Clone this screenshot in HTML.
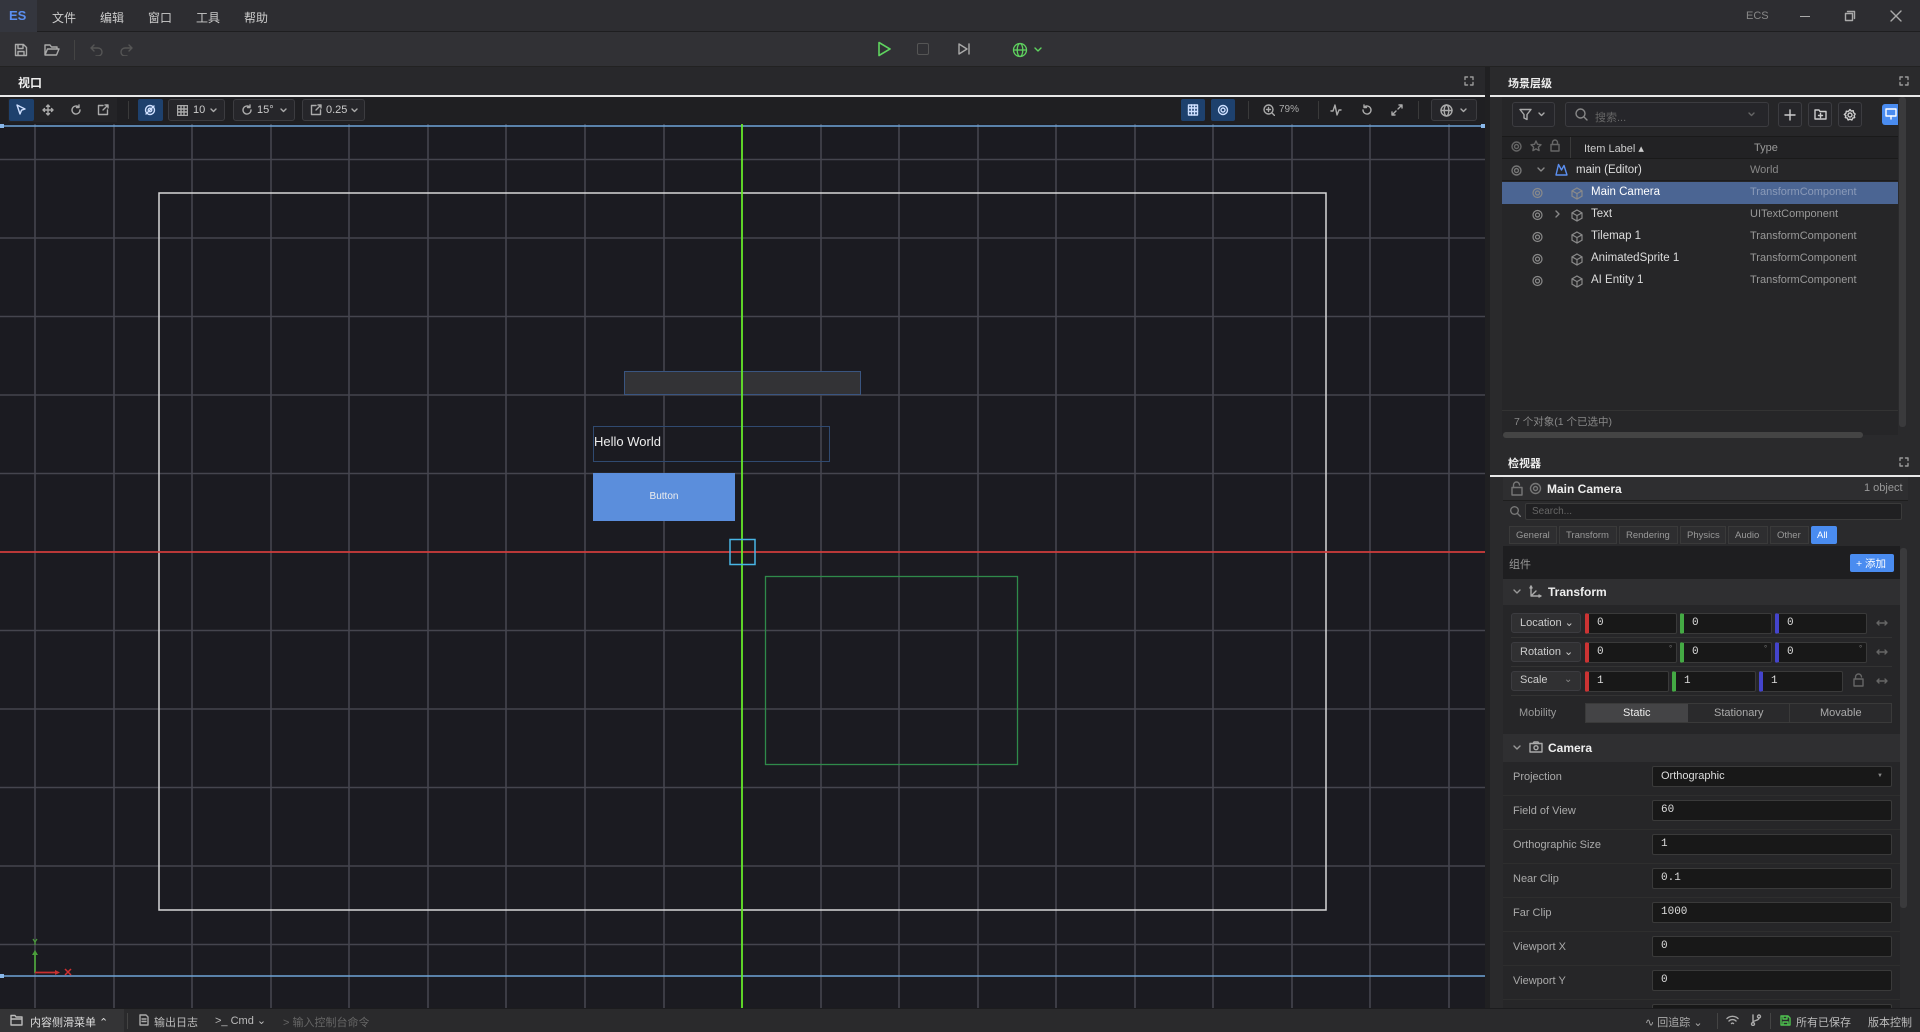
<!DOCTYPE html>
<html><head><meta charset="utf-8"><style>
*{box-sizing:border-box;margin:0;padding:0}
body{width:1920px;height:1032px;overflow:hidden;background:#2b2b2e;font-family:"Liberation Sans","Noto Sans CJK SC",sans-serif;color:#ddd;font-size:12px;position:relative}
.a{position:absolute}
.t{position:absolute;white-space:nowrap}
.mono{font-family:"Liberation Mono","DejaVu Sans Mono",monospace}
.ic{position:absolute;fill:none;stroke:#aaa;stroke-width:1.4;stroke-linecap:round;stroke-linejoin:round}
.btn{position:absolute;border:1px solid #3c3c40;border-radius:3px;background:#26262a}
.fld{position:absolute;background:#181818;border:1px solid #3a3a3a;border-radius:2px;height:21px;font-family:"Liberation Mono",monospace;font-size:11px;color:#ddd;padding:3px 8px}
.row{position:absolute;left:1503px;width:397px;height:34px;border-bottom:1px solid #2e2e2e}
.lbl{position:absolute;left:10px;top:9px;color:#aaa;font-size:11px}
</style></head><body>
<!-- menubar -->
<div class="a" style="left:0;top:0;width:1920px;height:32px;background:#2d2d31;border-bottom:1px solid #1e1e20"></div>
<div class="a" style="left:0;top:0;width:37px;height:32px;background:#34363e"></div>
<div class="t" style="left:9px;top:8px;color:#5b8ff0;font-weight:bold;font-size:13px">ES</div>
<div class="t" style="left:52px;top:9px;font-size:12px;color:#ccc">文件</div>
<div class="t" style="left:100px;top:9px;font-size:12px;color:#ccc">编辑</div>
<div class="t" style="left:148px;top:9px;font-size:12px;color:#ccc">窗口</div>
<div class="t" style="left:196px;top:9px;font-size:12px;color:#ccc">工具</div>
<div class="t" style="left:244px;top:9px;font-size:12px;color:#ccc">帮助</div>
<div class="t" style="left:1746px;top:10px;font-size:11px;color:#888">ECS</div>
<div class="a" style="left:1800px;top:16px;width:10px;height:1px;background:#aaa"></div>
<svg class="ic" style="left:1844px;top:10px" width="12" height="12"><rect x="1.5" y="3.5" width="7" height="7"/><path d="M3.5 1.5h7v7"/></svg>
<svg class="ic" style="left:1890px;top:10px" width="12" height="12"><path d="M1 1l10 10M11 1L1 11"/></svg>
<!-- toolbar -->
<div class="a" style="left:0;top:32px;width:1920px;height:35px;background:#313135;border-bottom:1px solid #222"></div>
<svg class="ic" style="left:14px;top:43px" width="14" height="14"><path d="M1.5 1.5h8l3 3v8h-11z M4 1.5v4h5v-4 M4 12.5v-4h6v4"/></svg>
<svg class="ic" style="left:44px;top:43px" width="16" height="14"><path d="M1 12V2h5l1.5 2H13v2 M1 12l2.5-6H15l-2.5 6z"/></svg>
<div class="a" style="left:74px;top:40px;width:1px;height:20px;background:#444"></div>
<svg class="ic" style="left:90px;top:44px;stroke:#555" width="14" height="12"><path d="M4 1L1 4l3 3 M1 4h7a4 4 0 010 8H6"/></svg>
<svg class="ic" style="left:119px;top:44px;stroke:#555" width="14" height="12"><path d="M10 1l3 3-3 3 M13 4H6a4 4 0 000 8h2"/></svg>
<svg class="a" style="left:876px;top:41px" width="16" height="16"><path d="M3 1.5L14 8 3 14.5z" fill="none" stroke="#5fd35f" stroke-width="1.6" stroke-linejoin="round"/></svg>
<div class="a" style="left:917px;top:43px;width:12px;height:12px;border:1.5px solid #555;border-radius:2px"></div>
<svg class="ic" style="left:957px;top:42px" width="14" height="14"><path d="M2 2l8 5-8 5z M12 2v10"/></svg>
<svg class="a" style="left:1012px;top:42px" width="16" height="16"><g fill="none" stroke="#5fd35f" stroke-width="1.3"><circle cx="8" cy="8" r="6.5"/><ellipse cx="8" cy="8" rx="2.8" ry="6.5"/><path d="M1.5 8h13"/></g></svg>
<svg class="ic" style="left:1034px;top:47px;stroke:#5fd35f" width="8" height="6"><path d="M1 1l3 3 3-3"/></svg>
<!-- viewport panel -->
<div class="a" style="left:0;top:67px;width:1485px;height:29px;background:#28282b"></div>
<div class="t" style="left:18px;top:74px;font-weight:bold;font-size:12px;color:#eee">视口</div>
<svg class="ic" style="left:1464px;top:76px;stroke:#999" width="10" height="10"><path d="M1 3.5V1h2.5M6.5 1H9v2.5M9 6.5V9H6.5M3.5 9H1V6.5"/></svg>
<div class="a" style="left:0;top:95px;width:1485px;height:2px;background:#e8e8e8"></div>
<div class="a" style="left:0;top:97px;width:1485px;height:27px;background:#1f1f22"></div>
<div class="a" style="left:8px;top:98px;width:109px;height:24px;background:#242427"></div>
<div class="a" style="left:9px;top:99px;width:25px;height:22px;background:#1e416d;border-radius:2px"></div>
<svg class="ic" style="left:15px;top:104px;stroke:#cfe0ff" width="12" height="12"><path d="M2 1l8 4-3.5 1.2L5 10z"/></svg>
<svg class="ic" style="left:42px;top:104px" width="12" height="12"><path d="M6 1v10M1 6h10M4.5 2.5L6 1l1.5 1.5M4.5 9.5L6 11l1.5-1.5M2.5 4.5L1 6l1.5 1.5M9.5 4.5L11 6 9.5 7.5"/></svg>
<svg class="ic" style="left:70px;top:104px" width="12" height="12"><path d="M10 6a4 4 0 11-1.5-3.1M9 1v2.5H6.5"/></svg>
<svg class="ic" style="left:97px;top:104px" width="12" height="12"><path d="M6 1.5H1.5v9h9V6 M6 6l5-5M8 1h3v3"/></svg>
<div class="a" style="left:128px;top:101px;width:1px;height:18px;background:#3a3a3a"></div>
<div class="a" style="left:138px;top:99px;width:25px;height:22px;background:#1e416d;border-radius:2px"></div>
<svg class="ic" style="left:144px;top:104px;stroke:#cfe0ff" width="12" height="12"><circle cx="6" cy="6" r="4.5"/><circle cx="6" cy="6" r="1.8"/><path d="M2 10l8-8"/></svg>
<div class="btn" style="left:168px;top:99px;width:57px;height:22px"></div>
<svg class="ic" style="left:177px;top:105px" width="11" height="11"><rect x=".5" y=".5" width="10" height="10"/><path d="M4 .5v10M7 .5v10M.5 4h10M.5 7h10"/></svg>
<div class="t" style="left:193px;top:104px;color:#ccc;font-size:11px">10</div>
<svg class="ic" style="left:210px;top:108px" width="7" height="5"><path d="M1 1l2.5 2.5L6 1"/></svg>
<div class="btn" style="left:233px;top:99px;width:62px;height:22px"></div>
<svg class="ic" style="left:241px;top:104px" width="12" height="12"><path d="M10 6a4 4 0 11-1.5-3.1M9 1v2.5H6.5"/></svg>
<div class="t" style="left:257px;top:104px;color:#ccc;font-size:11px">15°</div>
<svg class="ic" style="left:280px;top:108px" width="7" height="5"><path d="M1 1l2.5 2.5L6 1"/></svg>
<div class="btn" style="left:302px;top:99px;width:63px;height:22px"></div>
<svg class="ic" style="left:310px;top:104px" width="12" height="12"><path d="M6 1.5H1.5v9h9V6 M6 6l5-5M8 1h3v3"/></svg>
<div class="t" style="left:326px;top:104px;color:#ccc;font-size:11px">0.25</div>
<svg class="ic" style="left:351px;top:108px" width="7" height="5"><path d="M1 1l2.5 2.5L6 1"/></svg>
<div class="a" style="left:1181px;top:99px;width:24px;height:22px;background:#1e416d;border-radius:2px"></div>
<svg class="ic" style="left:1187px;top:104px;stroke:#cfe0ff" width="12" height="12"><rect x="1.5" y="1" width="9" height="10"/><path d="M4.5 1v10M7.5 1v10M1.5 4h9M1.5 7.5h9"/></svg>
<div class="a" style="left:1211px;top:99px;width:24px;height:22px;background:#1e416d;border-radius:2px"></div>
<svg class="ic" style="left:1217px;top:104px;stroke:#cfe0ff" width="12" height="12"><circle cx="6" cy="6" r="4.5"/><circle cx="6" cy="6" r="2"/></svg>
<div class="a" style="left:1248px;top:101px;width:1px;height:18px;background:#3a3a3a"></div>
<svg class="ic" style="left:1263px;top:104px" width="12" height="12"><circle cx="5.5" cy="5.5" r="4.5"/><path d="M9 9l2.5 2.5M5.5 3.5v4M3.5 5.5h4"/></svg>
<div class="t" style="left:1279px;top:104px;color:#aaa;font-size:10px">79%</div>
<div class="a" style="left:1318px;top:101px;width:1px;height:18px;background:#3a3a3a"></div>
<svg class="ic" style="left:1330px;top:104px" width="12" height="12"><path d="M1 7h2l2-6 2 10 2-5h2"/></svg>
<svg class="ic" style="left:1361px;top:104px" width="12" height="12"><path d="M2 6a4 4 0 101.5-3.1M3 1v2.5h2.5"/></svg>
<svg class="ic" style="left:1391px;top:104px" width="12" height="12"><path d="M7 5l4-4M8 1h3v3M5 7l-4 4M1 8v3h3"/></svg>
<div class="a" style="left:1418px;top:101px;width:1px;height:18px;background:#3a3a3a"></div>
<div class="btn" style="left:1431px;top:99px;width:46px;height:22px"></div>
<svg class="ic" style="left:1440px;top:104px" width="13" height="13"><circle cx="6.5" cy="6.5" r="5.5"/><ellipse cx="6.5" cy="6.5" rx="2.3" ry="5.5"/><path d="M1 6.5h11"/></svg>
<svg class="ic" style="left:1460px;top:108px" width="7" height="5"><path d="M1 1l2.5 2.5L6 1"/></svg>
<!-- canvas -->
<svg class="a" style="left:0;top:124px" width="1485" height="884" viewBox="0 124 1485 884">
<rect x="0" y="124" width="1485" height="884" fill="#1b1b21"/>
<g stroke="#45454e" stroke-width="1.6">
<path d="M35 124V1008M114 124V1008M192 124V1008M271 124V1008M349 124V1008M428 124V1008M506 124V1008M585 124V1008M664 124V1008M821 124V1008M899 124V1008M978 124V1008M1056 124V1008M1135 124V1008M1213 124V1008M1292 124V1008M1370 124V1008M1449 124V1008"/>
<path d="M0 159.5H1485M0 238H1485M0 316.5H1485M0 395H1485M0 473.5H1485M0 630.5H1485M0 709H1485M0 787.5H1485M0 866H1485M0 944.5H1485"/>
</g>
<path d="M0 126H1485M0 976H1485" stroke="#6fa4d8" stroke-width="1.5"/>
<rect x="0" y="124" width="4" height="4" fill="#8ab8ea"/><rect x="1481" y="124" width="4" height="4" fill="#8ab8ea"/>
<rect x="0" y="974" width="4" height="4" fill="#8ab8ea"/>
<rect x="159" y="193" width="1167" height="717" fill="none" stroke="#d8d8d8" stroke-width="1.5"/>
<rect x="765.5" y="576.5" width="252" height="188" fill="none" stroke="#2f8a4a" stroke-width="1.3"/>
<rect x="624.5" y="371.5" width="236" height="23" fill="#333336" stroke="#3a5580" stroke-width="1"/>
<rect x="593.5" y="426.5" width="236" height="35" fill="none" stroke="#304a70" stroke-width="1"/>
<text x="594" y="446" fill="#eee" font-family="Liberation Sans" font-size="13">Hello World</text>
<rect x="593" y="473" width="142" height="48" fill="#5b8edc"/>
<text x="664" y="499" fill="#eee" font-family="Liberation Sans" font-size="10" text-anchor="middle">Button</text>
<path d="M0 552H1485" stroke="#d03c3c" stroke-width="1.8"/>
<path d="M742 124V1008" stroke="#66e82a" stroke-width="1.8"/>
<rect x="730" y="539.5" width="25" height="25" fill="none" stroke="#49b6e6" stroke-width="1.5"/>
<path d="M35 973V953" stroke="#4a9e3a" stroke-width="1.8"/><path d="M32 955l3-5 3 5z" fill="#4a9e3a"/>
<path d="M33 939l2 3 2-3M35 942v3" stroke="#4a9e3a" stroke-width="1.2" fill="none"/>
<path d="M35 972.5H56" stroke="#c83030" stroke-width="1.8"/><path d="M55 970l5 2.5-5 2.5z" fill="#c83030"/>
<path d="M65 969l6 6M71 969l-6 6" stroke="#d03030" stroke-width="1.5"/>
</svg>
<!-- divider -->
<div class="a" style="left:1485px;top:67px;width:5px;height:941px;background:#202022"></div>
<!-- hierarchy -->
<div class="a" style="left:1490px;top:67px;width:430px;height:380px;background:#2a2a2c"></div>
<div class="t" style="left:1508px;top:75px;font-weight:bold;font-size:11px;color:#eee">场景层级</div>
<svg class="ic" style="left:1899px;top:76px;stroke:#999" width="10" height="10"><path d="M1 3.5V1h2.5M6.5 1H9v2.5M9 6.5V9H6.5M3.5 9H1V6.5"/></svg>
<div class="a" style="left:1490px;top:95px;width:430px;height:2px;background:#e8e8e8"></div>
<div class="a" style="left:1502px;top:97px;width:396px;height:338px;background:#262628"></div>
<div class="btn" style="left:1512px;top:102px;width:43px;height:25px"></div>
<svg class="ic" style="left:1519px;top:108px" width="13" height="13"><path d="M1 1.5h11L8 6.5v5l-3-1.5v-3.5z"/></svg>
<svg class="ic" style="left:1538px;top:112px" width="7" height="5"><path d="M1 1l2.5 2.5L6 1"/></svg>
<div class="btn" style="left:1565px;top:102px;width:204px;height:25px"></div>
<svg class="ic" style="left:1575px;top:108px;stroke:#888" width="13" height="13"><circle cx="5.5" cy="5.5" r="4.5"/><path d="M9 9l3 3"/></svg>
<div class="t" style="left:1595px;top:109px;color:#666;font-size:11px">搜索...</div>
<svg class="ic" style="left:1748px;top:112px;stroke:#666" width="7" height="5"><path d="M1 1l2.5 2.5L6 1"/></svg>
<div class="btn" style="left:1778px;top:102px;width:24px;height:25px"></div>
<svg class="ic" style="left:1784px;top:109px;stroke:#ccc" width="12" height="12"><path d="M6 1v10M1 6h10"/></svg>
<div class="btn" style="left:1808px;top:102px;width:24px;height:25px"></div>
<svg class="ic" style="left:1814px;top:108px;stroke:#ccc" width="13" height="13"><path d="M1 2h4l1 1.5h6V11H1z M6.5 5.5v4M4.5 7.5h4"/></svg>
<div class="btn" style="left:1838px;top:102px;width:24px;height:25px"></div>
<svg class="ic" style="left:1843px;top:108px;stroke:#ccc" width="14" height="14"><circle cx="7" cy="7" r="2"/><path d="M7 1.5l1.2 1.6 2-.4.4 2 1.6 1.3-1.1 1.7.6 1.9-2 .5-.8 1.9-1.9-.8-1.9.8-.8-1.9-2-.5.6-1.9L1.3 6.5l1.6-1.3.4-2 2 .4z"/></svg>
<div class="a" style="left:1882px;top:104px;width:16px;height:21px;background:#4a8cf0;border-radius:3px 0 0 3px"></div>
<svg class="ic" style="left:1885px;top:108px;stroke:#fff" width="12" height="12"><rect x="1" y="1" width="10" height="7"/><path d="M6 8v3"/></svg>
<div class="a" style="left:1502px;top:136px;width:396px;height:23px;background:#222224;border-top:1px solid #1a1a1a;border-bottom:1px solid #1a1a1a"></div>
<svg class="ic" style="left:1511px;top:141px;stroke:#666" width="11" height="11"><circle cx="5.5" cy="5.5" r="4.5"/><circle cx="5.5" cy="5.5" r="2"/></svg>
<svg class="ic" style="left:1530px;top:140px;stroke:#666" width="12" height="12"><path d="M6 1l1.5 3.3 3.5.4-2.6 2.4.7 3.5L6 8.9 2.9 10.6l.7-3.5L1 4.7l3.5-.4z"/></svg>
<svg class="ic" style="left:1550px;top:139px;stroke:#666" width="10" height="13"><rect x="1" y="5.5" width="8" height="6.5"/><path d="M2.5 5.5V3.5a2.5 2.5 0 015 0v2"/></svg>
<div class="a" style="left:1570px;top:137px;width:1px;height:21px;background:#3a3a3a"></div>
<div class="t" style="left:1584px;top:142px;color:#ccc;font-size:11px">Item Label ▴</div>
<div class="t" style="left:1754px;top:142px;color:#999;font-size:11px">Type</div>
<!-- rows -->
<div class="a" style="left:1502px;top:159px;width:396px;height:22px;border-bottom:1px solid #1c1c1e"></div>
<svg class="ic" style="left:1511px;top:165px;stroke:#777" width="11" height="11"><circle cx="5.5" cy="5.5" r="4.5"/><circle cx="5.5" cy="5.5" r="2"/></svg>
<svg class="ic" style="left:1537px;top:167px;stroke:#888" width="8" height="6"><path d="M1 1l3 3 3-3"/></svg>
<svg class="ic" style="left:1555px;top:163px;stroke:#5b8ff0" width="13" height="13"><path d="M1 12L3.5 1.5 6.5 7 9 2.5 12 12z"/></svg>
<div class="t" style="left:1576px;top:164px;color:#ddd;font-size:11.5px">main (Editor)</div>
<div class="t" style="left:1750px;top:164px;color:#888;font-size:11px">World</div>
<div class="a" style="left:1502px;top:182px;width:396px;height:22px;background:#4b6593"></div>
<div class="t" style="left:1591px;top:186px;color:#fff;font-size:11.5px">Main Camera</div>
<div class="t" style="left:1750px;top:186px;color:#8a9ab8;font-size:11px">TransformComponent</div>
<div class="t" style="left:1591px;top:208px;color:#ddd;font-size:11.5px">Text</div>
<div class="t" style="left:1750px;top:208px;color:#999;font-size:11px">UITextComponent</div>
<svg class="ic" style="left:1555px;top:210px;stroke:#888" width="6" height="8"><path d="M1 1l3 3-3 3"/></svg>
<div class="t" style="left:1591px;top:230px;color:#ddd;font-size:11.5px">Tilemap 1</div>
<div class="t" style="left:1750px;top:230px;color:#999;font-size:11px">TransformComponent</div>
<div class="t" style="left:1591px;top:252px;color:#ddd;font-size:11.5px">AnimatedSprite 1</div>
<div class="t" style="left:1750px;top:252px;color:#999;font-size:11px">TransformComponent</div>
<div class="t" style="left:1591px;top:274px;color:#ddd;font-size:11.5px">AI Entity 1</div>
<div class="t" style="left:1750px;top:274px;color:#999;font-size:11px">TransformComponent</div>
<svg class="a" style="left:1525px;top:182px" width="60" height="110"><g fill="none" stroke="#8a8a8a" stroke-width="1.2">
<g transform="translate(0,5)"><circle cx="12.5" cy="6" r="4.5"/><circle cx="12.5" cy="6" r="2"/><path d="M52 1l5 2.8v5.4L52 12l-5-2.8V3.8z M47 3.8l5 2.8 5-2.8M52 6.6V12"/></g>
<g transform="translate(0,27)"><circle cx="12.5" cy="6" r="4.5"/><circle cx="12.5" cy="6" r="2"/><path d="M52 1l5 2.8v5.4L52 12l-5-2.8V3.8z M47 3.8l5 2.8 5-2.8M52 6.6V12"/></g>
<g transform="translate(0,49)"><circle cx="12.5" cy="6" r="4.5"/><circle cx="12.5" cy="6" r="2"/><path d="M52 1l5 2.8v5.4L52 12l-5-2.8V3.8z M47 3.8l5 2.8 5-2.8M52 6.6V12"/></g>
<g transform="translate(0,71)"><circle cx="12.5" cy="6" r="4.5"/><circle cx="12.5" cy="6" r="2"/><path d="M52 1l5 2.8v5.4L52 12l-5-2.8V3.8z M47 3.8l5 2.8 5-2.8M52 6.6V12"/></g>
<g transform="translate(0,93)"><circle cx="12.5" cy="6" r="4.5"/><circle cx="12.5" cy="6" r="2"/><path d="M52 1l5 2.8v5.4L52 12l-5-2.8V3.8z M47 3.8l5 2.8 5-2.8M52 6.6V12"/></g>
</g></svg>
<div class="a" style="left:1502px;top:410px;width:396px;height:1px;background:#333"></div>
<div class="t" style="left:1514px;top:414px;color:#888;font-size:10.5px">7 个对象(1 个已选中)</div>
<div class="a" style="left:1503px;top:432px;width:360px;height:6px;background:#444;border-radius:3px"></div>
<div class="a" style="left:1899px;top:97px;width:7px;height:330px;background:#3a3a3c;border-radius:3px"></div>
<!-- inspector -->
<div class="a" style="left:1490px;top:447px;width:430px;height:561px;background:#2a2a2c"></div>
<div class="t" style="left:1508px;top:455px;font-weight:bold;font-size:11px;color:#eee">检视器</div>
<svg class="ic" style="left:1899px;top:457px;stroke:#999" width="10" height="10"><path d="M1 3.5V1h2.5M6.5 1H9v2.5M9 6.5V9H6.5M3.5 9H1V6.5"/></svg>
<div class="a" style="left:1490px;top:475px;width:430px;height:2px;background:#e8e8e8"></div>
<div class="a" style="left:1503px;top:477px;width:405px;height:24px;background:#2e2e30;border-bottom:1px solid #1e1e1e"></div>
<svg class="ic" style="left:1511px;top:481px;stroke:#777" width="12" height="15"><rect x="1" y="6.5" width="10" height="7.5"/><path d="M2.5 6.5V4a3 3 0 016 0"/></svg>
<svg class="ic" style="left:1529px;top:482px;stroke:#777" width="13" height="13"><circle cx="6.5" cy="6.5" r="2"/><circle cx="6.5" cy="6.5" r="5"/></svg>
<div class="t" style="left:1547px;top:482px;font-weight:bold;font-size:12px;color:#eee">Main Camera</div>
<div class="t" style="left:1864px;top:482px;color:#999;font-size:11px">1 object</div>
<svg class="ic" style="left:1510px;top:506px;stroke:#777" width="11" height="11"><circle cx="4.5" cy="4.5" r="3.8"/><path d="M7.5 7.5l3 3"/></svg>
<div class="a" style="left:1525px;top:503px;width:377px;height:17px;background:#202022;border:1px solid #3a3a3a;border-radius:2px"></div>
<div class="t" style="left:1532px;top:506px;color:#666;font-size:10px">Search...</div>
<div class="a" style="left:1509px;top:526px;width:48px;height:18px;border:1px solid #3a3a3a;background:#2e2e30"></div><div class="t" style="left:1516px;top:530px;color:#999;font-size:9.5px">General</div>
<div class="a" style="left:1559px;top:526px;width:58px;height:18px;border:1px solid #3a3a3a;background:#2e2e30"></div><div class="t" style="left:1566px;top:530px;color:#999;font-size:9.5px">Transform</div>
<div class="a" style="left:1619px;top:526px;width:59px;height:18px;border:1px solid #3a3a3a;background:#2e2e30"></div><div class="t" style="left:1626px;top:530px;color:#999;font-size:9.5px">Rendering</div>
<div class="a" style="left:1680px;top:526px;width:46px;height:18px;border:1px solid #3a3a3a;background:#2e2e30"></div><div class="t" style="left:1687px;top:530px;color:#999;font-size:9.5px">Physics</div>
<div class="a" style="left:1728px;top:526px;width:40px;height:18px;border:1px solid #3a3a3a;background:#2e2e30"></div><div class="t" style="left:1735px;top:530px;color:#999;font-size:9.5px">Audio</div>
<div class="a" style="left:1770px;top:526px;width:39px;height:18px;border:1px solid #3a3a3a;background:#2e2e30"></div><div class="t" style="left:1777px;top:530px;color:#999;font-size:9.5px">Other</div>
<div class="a" style="left:1811px;top:526px;width:26px;height:18px;background:#4a8cf0;border-radius:2px"></div><div class="t" style="left:1817px;top:530px;color:#fff;font-size:9.5px">All</div>
<div class="a" style="left:1503px;top:546px;width:397px;height:462px;background:#262628"></div>
<div class="a" style="left:1503px;top:546px;width:397px;height:33px;background:#1e1e20"></div>
<div class="t" style="left:1509px;top:556px;color:#999;font-size:11px">组件</div>
<div class="a" style="left:1850px;top:554px;width:44px;height:18px;background:#4a8cf0;border-radius:2px"></div>
<div class="t" style="left:1856px;top:556px;color:#fff;font-size:10.5px">+ 添加</div>
<div class="a" style="left:1503px;top:579px;width:397px;height:26px;background:#2f2f31"></div>
<svg class="ic" style="left:1513px;top:589px;stroke:#999" width="8" height="6"><path d="M1 1l3 3 3-3"/></svg>
<svg class="ic" style="left:1529px;top:585px;stroke:#aaa" width="14" height="14"><path d="M2 1v10h10M1 3l1-2 1 2M10 10l2 1-2 1M2 11l5-5"/></svg>
<div class="t" style="left:1548px;top:585px;font-weight:bold;font-size:12px;color:#eee">Transform</div>
<!-- transform rows -->
<div class="btn" style="left:1511px;top:613px;width:70px;height:20px;background:#303032"></div><div class="t" style="left:1520px;top:616px;color:#ccc;font-size:11px">Location ⌄</div>
<div class="btn" style="left:1511px;top:642px;width:70px;height:20px;background:#303032"></div><div class="t" style="left:1520px;top:645px;color:#ccc;font-size:11px">Rotation ⌄</div>
<div class="btn" style="left:1511px;top:671px;width:70px;height:20px;background:#303032"></div><div class="t" style="left:1520px;top:674px;color:#ccc;font-size:11px">Scale</div><div class="t" style="left:1564px;top:674px;color:#888;font-size:10px">⌄</div>
<div class="a" style="left:1511px;top:637px;width:381px;height:1px;background:#333"></div>
<div class="a" style="left:1511px;top:666px;width:381px;height:1px;background:#333"></div>
<div class="a" style="left:1511px;top:695px;width:381px;height:1px;background:#333"></div>
<div class="fld" style="left:1585px;top:613px;width:92px;border-left:4px solid #c33">0</div>
<div class="fld" style="left:1680px;top:613px;width:92px;border-left:4px solid #4a4">0</div>
<div class="fld" style="left:1775px;top:613px;width:92px;border-left:4px solid #44c">0</div>
<div class="fld" style="left:1585px;top:642px;width:92px;border-left:4px solid #c33">0</div>
<div class="fld" style="left:1680px;top:642px;width:92px;border-left:4px solid #4a4">0</div>
<div class="fld" style="left:1775px;top:642px;width:92px;border-left:4px solid #44c">0</div>
<div class="t" style="left:1669px;top:644px;color:#777;font-size:8px">°</div><div class="t" style="left:1764px;top:644px;color:#777;font-size:8px">°</div><div class="t" style="left:1859px;top:644px;color:#777;font-size:8px">°</div>
<div class="fld" style="left:1585px;top:671px;width:84px;border-left:4px solid #c33">1</div>
<div class="fld" style="left:1672px;top:671px;width:84px;border-left:4px solid #4a4">1</div>
<div class="fld" style="left:1759px;top:671px;width:84px;border-left:4px solid #44c">1</div>
<svg class="ic" style="left:1853px;top:673px;stroke:#666" width="11" height="14"><rect x="1" y="6" width="9" height="7"/><path d="M2.5 6V4a3 3 0 016 0"/></svg>
<svg class="ic" style="left:1876px;top:619px;stroke:#666" width="12" height="8"><path d="M1 4h10M3 2L1 4l2 2M9 2l2 2-2 2"/></svg>
<svg class="ic" style="left:1876px;top:648px;stroke:#666" width="12" height="8"><path d="M1 4h10M3 2L1 4l2 2M9 2l2 2-2 2"/></svg>
<svg class="ic" style="left:1876px;top:677px;stroke:#666" width="12" height="8"><path d="M1 4h10M3 2L1 4l2 2M9 2l2 2-2 2"/></svg>
<div class="t" style="left:1519px;top:707px;color:#999;font-size:11px">Mobility</div>
<div class="a" style="left:1585px;top:703px;width:307px;height:20px;border:1px solid #3a3a3a;background:#2a2a2c"></div>
<div class="a" style="left:1586px;top:704px;width:102px;height:18px;background:#444446"></div>
<div class="a" style="left:1789px;top:704px;width:1px;height:18px;background:#3a3a3a"></div>
<div class="t" style="left:1623px;top:707px;color:#eee;font-size:11px">Static</div>
<div class="t" style="left:1714px;top:707px;color:#aaa;font-size:11px">Stationary</div>
<div class="t" style="left:1820px;top:707px;color:#aaa;font-size:11px">Movable</div>
<div class="a" style="left:1503px;top:734px;width:397px;height:28px;background:#2f2f31"></div>
<svg class="ic" style="left:1513px;top:745px;stroke:#999" width="8" height="6"><path d="M1 1l3 3 3-3"/></svg>
<svg class="ic" style="left:1529px;top:741px;stroke:#aaa" width="14" height="12"><rect x="1" y="2.5" width="12" height="8.5"/><circle cx="7" cy="6.7" r="2"/><path d="M4 2.5l1-1.5h4l1 1.5"/></svg>
<div class="t" style="left:1548px;top:741px;font-weight:bold;font-size:12px;color:#eee">Camera</div>
<div class="row" style="top:762px"><div class="lbl">Projection</div></div>
<div class="fld" style="left:1652px;top:766px;width:240px;font-family:'Liberation Sans',sans-serif">Orthographic</div><div class="t" style="left:1877px;top:773px;color:#888;font-size:6px">▼</div>
<div class="row" style="top:796px"><div class="lbl">Field of View</div></div><div class="fld" style="left:1652px;top:800px;width:240px">60</div>
<div class="row" style="top:830px"><div class="lbl">Orthographic Size</div></div><div class="fld" style="left:1652px;top:834px;width:240px">1</div>
<div class="row" style="top:864px"><div class="lbl">Near Clip</div></div><div class="fld" style="left:1652px;top:868px;width:240px">0.1</div>
<div class="row" style="top:898px"><div class="lbl">Far Clip</div></div><div class="fld" style="left:1652px;top:902px;width:240px">1000</div>
<div class="row" style="top:932px"><div class="lbl">Viewport X</div></div><div class="fld" style="left:1652px;top:936px;width:240px">0</div>
<div class="row" style="top:966px"><div class="lbl">Viewport Y</div></div><div class="fld" style="left:1652px;top:970px;width:240px">0</div>
<div class="fld" style="left:1652px;top:1004px;width:240px"></div>
<div class="a" style="left:1900px;top:548px;width:7px;height:360px;background:#3a3a3c;border-radius:3px"></div>
<!-- status bar -->
<div class="a" style="left:0;top:1008px;width:1920px;height:24px;background:#2a2a2c;border-top:1px solid #1c1c1e"></div>
<div class="a" style="left:0;top:1009px;width:124px;height:23px;background:#343436"></div>
<svg class="ic" style="left:10px;top:1014px;stroke:#bbb" width="13" height="12"><path d="M1 11V1.5h4l1 1.5h6V11z M1 5h11"/></svg>
<div class="t" style="left:30px;top:1014px;color:#ddd;font-size:11px">内容侧滑菜单 ⌃</div>
<div class="a" style="left:127px;top:1013px;width:1px;height:16px;background:#444"></div>
<svg class="ic" style="left:139px;top:1014px;stroke:#aaa" width="10" height="12"><path d="M1 1h6l2 2v8H1z M3 5h4M3 7.5h4"/></svg>
<div class="t" style="left:154px;top:1014px;color:#bbb;font-size:11px">输出日志</div>
<div class="t" style="left:215px;top:1014px;color:#bbb;font-size:11px">&gt;_ Cmd ⌄</div>
<div class="t" style="left:283px;top:1014px;color:#666;font-size:11px">&gt; 输入控制台命令</div>
<div class="t" style="left:1645px;top:1014px;color:#aaa;font-size:11px">∿ 回追踪 ⌄</div>
<div class="a" style="left:1717px;top:1013px;width:1px;height:16px;background:#444"></div>
<svg class="ic" style="left:1726px;top:1015px;stroke:#aaa" width="13" height="10"><path d="M1 3.5a8 8 0 0111 0M3 6a5 5 0 017 0M5.5 8.5a1.5 1.5 0 012 0"/></svg>
<svg class="ic" style="left:1750px;top:1014px;stroke:#aaa" width="12" height="12"><circle cx="3" cy="10" r="1.5"/><circle cx="9" cy="2.5" r="1.5"/><path d="M3 1v7.5M9 4c0 3-6 2-6 4.5"/></svg>
<div class="a" style="left:1770px;top:1013px;width:1px;height:16px;background:#444"></div>
<svg class="ic" style="left:1780px;top:1015px;stroke:#4ec24e" width="11" height="11"><path d="M1 1h7l2 2v7H1z M3 1v3h4V1M3 10V7h5v3"/></svg>
<div class="t" style="left:1796px;top:1014px;color:#bbb;font-size:11px">所有已保存</div>
<div class="t" style="left:1868px;top:1014px;color:#bbb;font-size:11px">版本控制</div>
</body></html>
